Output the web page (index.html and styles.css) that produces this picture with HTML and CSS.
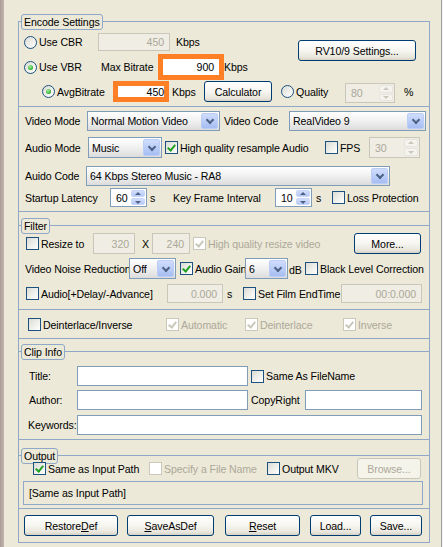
FILE: index.html
```html
<!DOCTYPE html>
<html>
<head>
<meta charset="utf-8">
<link rel="stylesheet" href="styles.css">
</head>
<body>
<div class="win">
 <div class="frame">
  <span class="glabel">Encode Settings</span>

  <section class="sec sec-enc">
   <div class="row h18">
    <span class="opt ml5 w74"><i class="radio"></i>Use CBR</span>
    <span class="tb dis w72 pr5">450</span>
    <span class="ml6">Kbps</span>
    <span class="btn btn-rv">RV10/9 Settings...</span>
   </div>
   <div class="row h26 mt3">
    <span class="opt ml5 w77"><i class="radio on"></i>Use VBR</span>
    <span class="w57">Max Bitrate</span>
    <span class="tb hl w66 pr5">900</span>
    <span>Kbps</span>
   </div>
   <div class="row h21 mt1">
    <span class="opt ml23 w71"><i class="radio on"></i>AvgBitrate</span>
    <span class="tb hl w56 pr0">450</span>
    <span class="ml3 w32">Kbps</span>
    <span class="btn w68">Calculator</span>
    <span class="opt ml9 w64"><i class="radio"></i>Quality</span>
    <span class="spin dis w50 h20 top2"><span class="sval">80</span><span class="arr"><i class="up"></i><i class="dn"></i></span></span>
    <span class="ml9">%</span>
   </div>
  </section>

  <section class="sec sec-video">
   <div class="row h20">
    <span class="ml6 w62">Video Mode</span>
    <span class="sel w133"><span class="stext">Normal Motion Video</span><i class="dd"></i></span>
    <span class="ml4 w65">Video Code</span>
    <span class="sel w137"><span class="stext">RealVideo 9</span><i class="dd"></i></span>
   </div>
   <div class="row h21 mt6">
    <span class="ml6 w63">Audio Mode</span>
    <span class="sel w74"><span class="stext">Music</span><i class="dd"></i></span>
    <span class="chkl ml3 w160"><i class="chk on"></i>High quality resample Audio</span>
    <span class="chkl w44"><i class="chk"></i>FPS</span>
    <span class="spin dis w51"><span class="sval">30</span><span class="arr"><i class="up"></i><i class="dn"></i></span></span>
   </div>
   <div class="row h20 mt8">
    <span class="ml6 w61">Auido Code</span>
    <span class="sel w304"><span class="stext">64 Kbps Stereo Music - RA8</span><i class="dd"></i></span>
   </div>
   <div class="row h19 mt2">
    <span class="ml6 w85">Startup Latency</span>
    <span class="spin w37"><span class="sval">60</span><span class="arr"><i class="up"></i><i class="dn"></i></span></span>
    <span class="ml3 w23">s</span>
    <span class="w102">Key Frame Interval</span>
    <span class="spin w37"><span class="sval">10</span><span class="arr"><i class="up"></i><i class="dn"></i></span></span>
    <span class="ml4 w16">s</span>
    <span class="chkl"><i class="chk"></i>Loss Protection</span>
   </div>
  </section>

  <section class="sec sec-filter">
   <span class="glabel">Filter</span>
   <div class="row h21">
    <span class="chkl ml7 w67"><i class="chk"></i>Resize to</span>
    <span class="tb dis w42 h19 pr5">320</span>
    <span class="x">X</span>
    <span class="tb dis w38 h19 pr5">240</span>
    <span class="chkl ml3 grey"><i class="chk dis on"></i>High quality resize video</span>
    <span class="btn btn-more">More...</span>
   </div>
   <div class="row h21 mt4">
    <span class="ml6 w104 clip">Video Noise Reduction</span>
    <span class="sel w47"><span class="stext">Off</span><i class="dd"></i></span>
    <span class="chkl ml4 w65 clip"><i class="chk on"></i>Audio Gain</span>
    <span class="sel w43"><span class="stext">6</span><i class="dd"></i></span>
    <span class="ml1 w16 low">dB</span>
    <span class="chkl"><i class="chk"></i>Black Level Correction</span>
   </div>
   <div class="row h19 mt5">
    <span class="chkl ml7 w141"><i class="chk"></i>Audio[+Delay/-Advance]</span>
    <span class="tb dis w56 pr5">0.000</span>
    <span class="ml4 w16">s</span>
    <span class="chkl w98"><i class="chk"></i>Set Film EndTime</span>
    <span class="tb dis w81 pr5">00:0.000</span>
   </div>
   <div class="subsep"></div>
   <div class="row h15 mt7">
    <span class="chkl ml9 w138"><i class="chk"></i>Deinterlace/Inverse</span>
    <span class="chkl w79 grey"><i class="chk dis on"></i>Automatic</span>
    <span class="chkl w98 grey"><i class="chk dis on"></i>Deinterlace</span>
    <span class="chkl grey"><i class="chk dis on"></i>Inverse</span>
   </div>
  </section>

  <section class="sec sec-clip">
   <span class="glabel">Clip Info</span>
   <div class="row h20">
    <span class="ml10 w48">Title:</span>
    <span class="tb w171"></span>
    <span class="chkl ml3"><i class="chk"></i>Same As FileName</span>
   </div>
   <div class="row h20 mt4">
    <span class="ml10 w48">Author:</span>
    <span class="tb w171"></span>
    <span class="ml3 w54">CopyRight</span>
    <span class="tb w117"></span>
   </div>
   <div class="row h20 mt5">
    <span class="ml9 w49">Keywords:</span>
    <span class="tb w345"></span>
   </div>
  </section>

  <section class="sec sec-out">
   <span class="glabel">Output</span>
   <div class="row h21">
    <span class="chkl ml14 w116"><i class="chk on"></i>Same as Input Path</span>
    <span class="chkl w118 grey"><i class="chk dis"></i>Specify a File Name</span>
    <span class="chkl w90"><i class="chk"></i>Output MKV</span>
    <span class="btn dis w64">Browse...</span>
   </div>
   <div class="pathbox">[Same as Input Path]</div>
  </section>

  <section class="sec sec-btn">
   <div class="row h21">
    <span class="btn ml5 w94">Restore<u>D</u>ef</span>
    <span class="btn ml9 w87"><u>S</u>aveAsDef</span>
    <span class="btn ml11 w75"><u>R</u>eset</span>
    <span class="btn ml10 w51">Load...</span>
    <span class="btn ml9 w52">Save...</span>
   </div>
  </section>
 </div>
</div>
</body>
</html>
```
FILE: styles.css
```css
* { box-sizing: border-box; }
html, body { margin: 0; padding: 0; }
body {
  width: 443px; height: 547px; overflow: hidden;
  font-family: Tahoma, "Liberation Sans", Arial, sans-serif;
  font-size: 10.6px; letter-spacing: -0.1px; color: #000; background: #ECE9D8;
}
u { text-decoration: underline; text-underline-offset: 1px; }
.win {
  width: 443px; height: 547px; padding: 21px 0 0 18px;
  background: linear-gradient(to right, #a99c96 0, #c3b6ae 4px, #ECE9D8 4px, #ECE9D8 441px, #a0a0a0 441px, #a0a0a0 442px, #f2f2f2 442px);
}
.frame {
  position: relative; width: 412px; height: 522px;
  border: 1px solid #8fa8c8;
}
.glabel {
  position: absolute; left: 2px; top: -8px; height: 16px;
  padding: 0 2px; line-height: 14px; white-space: nowrap;
  border: 1px solid #8fa8c8; border-radius: 3px; background: #ECE9D8;
}
.sec { position: relative; }
.sec-enc { height: 85px; padding-top: 11px; border-bottom: 1px solid #8fa8c8; }
.sec-video { height: 105px; padding-top: 4px; border-bottom: 1px solid #8fa8c8; }
.sec-filter { margin-top: 13px; height: 114px; padding-top: 7px; border-top: 1px solid #8fa8c8; border-bottom: 1px solid #8fa8c8; }
.sec-clip { margin-top: 12px; height: 89px; padding-top: 14px; border-top: 1px solid #8fa8c8; border-bottom: 1px solid #8fa8c8; }
.sec-out { margin-top: 15px; height: 54px; padding-top: 2px; border-top: 1px solid #8fa8c8; border-bottom: 1px solid #8fa8c8; }
.sec-btn { height: 33px; padding-top: 6px; }
.subsep { margin-top: 6px; height: 1px; background: #8fa8c8; }

.row { display: flex; align-items: center; white-space: nowrap; }
.row > * { flex: none; }
.h15 { height: 15px; } .h18 { height: 18px; } .h19 { height: 19px; } .h20 { height: 20px; }
.h21 { height: 21px; } .h26 { height: 26px; }
.mt1 { margin-top: 1px; } .mt2 { margin-top: 2px; } .mt3 { margin-top: 3px; } .mt4 { margin-top: 4px; }
.mt5 { margin-top: 5px; } .mt6 { margin-top: 6px; } .mt7 { margin-top: 7px; } .mt8 { margin-top: 8px; }
.ml1 { margin-left: 1px; } .ml3 { margin-left: 3px; } .ml4 { margin-left: 4px; } .ml5 { margin-left: 5px; }
.ml6 { margin-left: 6px; } .ml7 { margin-left: 7px; } .ml9 { margin-left: 9px; } .ml10 { margin-left: 10px; }
.ml11 { margin-left: 11px; } .ml14 { margin-left: 14px; } .ml23 { margin-left: 23px; }
.w16 { width: 16px; } .w23 { width: 23px; } .w32 { width: 32px; } .w37 { width: 37px; } .w38 { width: 38px; }
.w42 { width: 42px; } .w43 { width: 43px; } .w44 { width: 44px; } .w47 { width: 47px; } .w48 { width: 48px; }
.w49 { width: 49px; } .w50 { width: 50px; } .w51 { width: 51px; } .w52 { width: 52px; } .w54 { width: 54px; }
.w56 { width: 56px; } .w57 { width: 57px; } .w61 { width: 61px; } .w62 { width: 62px; } .w63 { width: 63px; }
.w64 { width: 64px; } .w65 { width: 65px; } .w66 { width: 66px; } .w67 { width: 67px; } .w68 { width: 68px; }
.w71 { width: 71px; } .w72 { width: 72px; } .w74 { width: 74px; } .w75 { width: 75px; } .w77 { width: 77px; }
.w79 { width: 79px; } .w81 { width: 81px; } .w85 { width: 85px; } .w87 { width: 87px; } .w90 { width: 90px; }
.w94 { width: 94px; } .w98 { width: 98px; } .w102 { width: 102px; } .w104 { width: 104px; } .w116 { width: 116px; }
.w117 { width: 117px; } .w118 { width: 118px; } .w133 { width: 133px; } .w137 { width: 137px; } .w138 { width: 138px; }
.w141 { width: 141px; } .w160 { width: 160px; } .w171 { width: 171px; } .w304 { width: 304px; } .w345 { width: 345px; }
.clip { overflow: hidden; }
.low { padding-top: 3px; }
.grey { color: #ACA899; }
.x { width: 17px; padding-left: 7px; }

/* radio + checkbox */
.opt, .chkl { display: inline-flex; align-items: center; gap: 2px; }
.radio {
  width: 13px; height: 13px; border-radius: 50%;
  border: 1px solid #1c5180;
  background: linear-gradient(135deg, #dcdcd5, #fff);
  position: relative; flex: none;
}
.radio.on::after {
  content: ""; position: absolute; left: 3px; top: 3px; width: 5px; height: 5px; border-radius: 50%;
  background: radial-gradient(circle at 40% 35%, #a8f0a0, #2fae2f 70%, #1f8a1f);
}
.chk {
  width: 13px; height: 13px; border: 1px solid #1c5180;
  background: linear-gradient(135deg, #dcdcd5, #fff);
  position: relative; flex: none;
}
.chk.on::after {
  content: ""; position: absolute; left: 3px; top: 1px; width: 3px; height: 6px;
  border: solid #21a121; border-width: 0 2px 2px 0; transform: rotate(40deg);
}
.chk.dis { border-color: #cac8bb; background: #fff; }
.chk.dis.on::after { border-color: #cac8bb; }

/* text boxes */
.tb {
  display: flex; align-items: center; justify-content: flex-end; height: 100%;
  border: 1px solid #7f9db9; background: #fff; padding: 0 4px;
}
.tb.dis { border-color: #c9c7ba; background: #efede4; color: #aca899; }
.tb.hl { border: 5px solid #ff7f27; }
.pr5 { padding-right: 5px; }
.pr0 { padding-right: 0; }

/* combobox */
.sel {
  display: flex; align-items: stretch; height: 100%;
  border: 1px solid #7f9db9; background: linear-gradient(#ffffff, #f2f2f2 45%, #dcdcdc);
}
.stext { flex: 1; display: flex; align-items: center; padding-left: 3px; overflow: hidden; }
.dd {
  width: 17px; margin: 1px; border-radius: 2px; position: relative;
  background: linear-gradient(#cfdcfc, #b7cbf7 60%, #a7bdf2);
  border: 1px solid #bccdf5;
}
.dd::after {
  content: ""; position: absolute; left: 5px; top: 50%; width: 4px; height: 4px; margin-top: -4px;
  border: solid #4d6185; border-width: 0 2px 2px 0; transform: rotate(45deg);
}

/* spinner */
.spin {
  display: flex; align-items: stretch; height: 100%;
  border: 1px solid #7f9db9; background: #fff;
}
.top2 { align-self: flex-start; margin-top: 2px; height: 20px; }
.sval { flex: 1; display: flex; align-items: center; padding-left: 5px; }
.arr { width: 15px; display: flex; flex-direction: column; padding: 1px 1px 1px 0; gap: 1px; }
.arr i {
  flex: 1; position: relative; border-radius: 2px;
  background: linear-gradient(#d3defc, #b6c9f6); border: 1px solid #c7d5f8;
}
.arr i::after {
  content: ""; position: absolute; left: 50%; top: 50%; margin-left: -3px;
  border-left: 3px solid transparent; border-right: 3px solid transparent;
}
.arr .up::after { border-bottom: 3px solid #4d6185; margin-top: -2px; }
.arr .dn::after { border-top: 3px solid #4d6185; margin-top: -1px; }
.spin.dis { border-color: #c9c7ba; background: #efede4; color: #aca899; }
.spin.dis .arr i { background: #f4f3ee; border-color: #e6e4dc; }
.spin.dis .arr .up::after { border-bottom-color: #cac8bb; }
.spin.dis .arr .dn::after { border-top-color: #cac8bb; }

/* buttons */
.btn {
  display: flex; align-items: center; justify-content: center; height: 21px;
  border: 1px solid #003c74; border-radius: 3px;
  background: linear-gradient(#ffffff, #f6f5f0 50%, #e8e6dc 85%, #d6d0c5);
}
.btn.dis { border-color: #c9c7ba; color: #aca899; background: #f5f4ea; }
.btn-rv { width: 118px; margin-left: auto; margin-right: 13px; align-self: flex-start; margin-top: 7px; }
.btn-more { width: 67px; margin-left: auto; margin-right: 8px; }

.pathbox {
  margin: 2px 0 0 4px; width: 400px; height: 24px;
  border: 1px solid #8fa8c8; padding-left: 5px;
  display: flex; align-items: center;
}
```
